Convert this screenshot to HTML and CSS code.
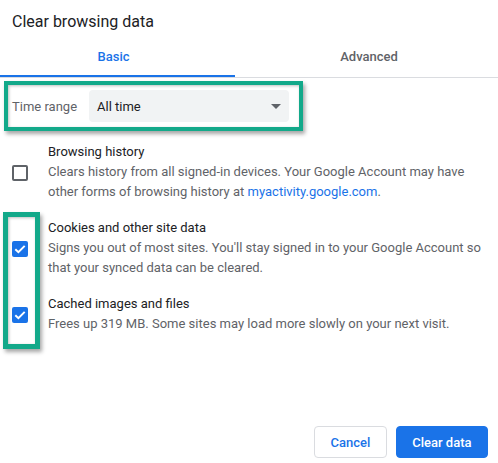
FILE: index.html
```html
<!DOCTYPE html>
<html>
<head>
<meta charset="utf-8">
<link rel="stylesheet" href="styles.css">
</head>
<body>
<div class="dialog">
  <div class="title">Clear browsing data</div>
  <div class="tabs">
    <div class="tab tab-basic active">Basic</div>
    <div class="tab tab-advanced">Advanced</div>
  </div>
  <div class="time-row">
    <span class="time-label">Time range</span>
    <div class="select">
      <span>All time</span>
      <svg class="arrow" width="10" height="5" viewBox="0 0 10 5"><path d="M0 0H10L5 5Z" fill="#5f6368"/></svg>
    </div>
  </div>
  <div class="items">
    <div class="item item-first">
      <span class="box"></span>
      <div class="text">
        <div class="label">Browsing history</div>
        <div class="desc">Clears history from all signed-in devices. Your Google Account may have other forms of browsing history at <span class="link">myactivity.google.com</span>.</div>
      </div>
    </div>
    <div class="item">
      <span class="box checked"><svg width="16" height="16" viewBox="0 0 16 16"><path d="M3.3 8.2L6.4 11.2L12.7 4.9" fill="none" stroke="#fff" stroke-width="2"/></svg></span>
      <div class="text">
        <div class="label">Cookies and other site data</div>
        <div class="desc">Signs you out of most sites. You'll stay signed in to your Google Account so that your synced data can be cleared.</div>
      </div>
    </div>
    <div class="item">
      <span class="box checked"><svg width="16" height="16" viewBox="0 0 16 16"><path d="M3.3 8.2L6.4 11.2L12.7 4.9" fill="none" stroke="#fff" stroke-width="2"/></svg></span>
      <div class="text">
        <div class="label">Cached images and files</div>
        <div class="desc">Frees up 319 MB. Some sites may load more slowly on your next visit.</div>
      </div>
    </div>
  </div>
  <div class="footer">
    <button class="btn btn-cancel">Cancel</button>
    <button class="btn btn-primary">Clear data</button>
  </div>
  <div class="mark mark-time"></div>
  <div class="mark mark-checks"></div>
</div>
</body>
</html>
```

FILE: styles.css
```css
html, body {
  margin: 0;
  padding: 0;
  background: #fff;
}
body {
  font-family: Roboto, "Liberation Sans", Arial, sans-serif;
  color: #202124;
}
.dialog {
  position: relative;
  width: 498px;
  height: 463px;
  display: flex;
  flex-direction: column;
  overflow: hidden;
}
.title {
  font-size: 16px;
  line-height: 20px;
  padding: 12px 12px 0 12px;
  color: #202124;
}
.tabs {
  display: flex;
  margin-top: 12px;
  border-bottom: 1px solid #dadce0;
  padding-bottom: 1px;
}
.tab {
  font-size: 13px;
  font-weight: 500;
  line-height: 18px;
  height: 18px;
  padding-top: 4px;
  padding-bottom: 9px;
  text-align: center;
  color: #5f6368;
  border-bottom: 2px solid transparent;
  margin-bottom: -1px;
}
.tab-basic {
  width: 227px;
  padding-right: 8px;
}
.tab-basic.active {
  color: #1a73e8;
  border-bottom-color: #1a73e8;
}
.tab-advanced {
  flex: 1;
  padding-left: 5px;
}
.time-row {
  display: flex;
  align-items: center;
  margin-top: 12px;
  padding-left: 12px;
}
.time-label {
  font-size: 13px;
  color: #5f6368;
  width: 77px;
}
.select {
  width: 200px;
  height: 32px;
  box-sizing: border-box;
  background: #f1f3f4;
  border-radius: 4px;
  display: flex;
  align-items: center;
  justify-content: space-between;
  padding: 0 8px 0 8px;
  font-size: 13px;
  color: #202124;
}
.arrow {
  margin-top: 1px;
}
.items {
  display: flex;
  flex-direction: column;
  margin-top: 20px;
}
.item {
  display: flex;
  align-items: center;
  padding: 0 12px 0 12px;
  margin-top: 16px;
}
.item-first {
  margin-top: 0;
}
.box {
  width: 16px;
  height: 16px;
  box-sizing: border-box;
  border: 2px solid #5f6368;
  border-radius: 2px;
  flex: none;
  margin-right: 20px;
  margin-top: 1px;
}
.box.checked {
  border: none;
  background: #1a73e8;
}
.box svg {
  display: block;
}
.text {
  font-size: 13px;
  line-height: 20px;
}
.label {
  color: #202124;
}
.desc {
  color: #5f6368;
}
.link {
  color: #1a73e8;
}
.footer {
  margin-top: auto;
  display: flex;
  justify-content: flex-end;
  gap: 9px;
  padding: 0 10px 5px 0;
}
.btn {
  height: 32px;
  box-sizing: border-box;
  font-family: Roboto, "Liberation Sans", Arial, sans-serif;
  font-size: 13px;
  font-weight: 500;
  border-radius: 4px;
  padding: 0 15.5px;
  cursor: pointer;
}
.btn-cancel {
  background: #fff;
  color: #1a73e8;
  border: 1px solid #dadce0;
}
.btn-primary {
  background: #1a73e8;
  color: #fff;
  border: 1px solid #1a73e8;
}
.mark {
  position: absolute;
  border: 4px solid #13a98a;
  box-sizing: border-box;
  box-shadow: 2px 3px 4px rgba(0, 0, 0, 0.35), inset 1px 1px 3px rgba(0, 0, 0, 0.25);
}
.mark-time {
  left: 4px;
  top: 81px;
  width: 299px;
  height: 50px;
}
.mark-checks {
  left: 3px;
  top: 212px;
  width: 37px;
  height: 137px;
  border-width: 5px;
}
```
